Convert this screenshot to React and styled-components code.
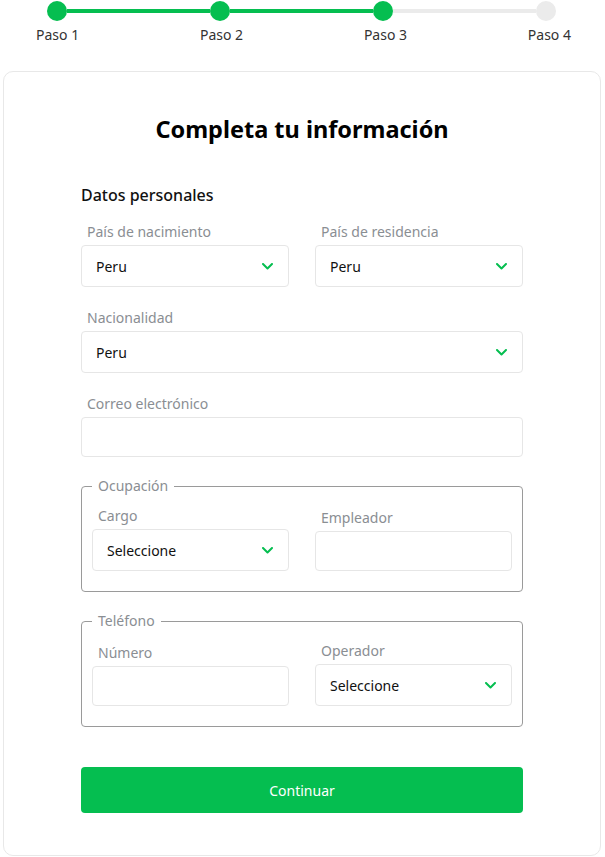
import React from "react"
import styled, { createGlobalStyle } from "styled-components"

const GREEN = "#05be50"

const GlobalStyle = createGlobalStyle`
  body {
    margin: 0;
    background: #ffffff;
    font-family: "Noto Sans", "Open Sans", Arial, sans-serif;
    color: #111111;
  }
  * { box-sizing: border-box; }
`

const Page = styled.div`
  width: 605px;
  padding-top: 1px;
`

const Stepper = styled.div`
  display: flex;
  flex-direction: column;
`

const DotsRow = styled.div`
  display: flex;
  align-items: center;
  padding: 0 49px 0 47px;
`

const Dot = styled.div`
  width: 20px;
  height: 20px;
  border-radius: 50%;
  flex-shrink: 0;
  background: ${(p) => (p.active ? GREEN : "#ebebeb")};
`

const Track = styled.div`
  flex: 1;
  height: 4px;
  background: ${(p) => (p.active ? GREEN : "#ebebeb")};
`

const LabelsRow = styled.div`
  display: flex;
  justify-content: space-between;
  padding: 4px 34px 0 36px;
`

const StepLabel = styled.span`
  font-size: 14px;
  line-height: 20px;
  color: #333;
`

const Card = styled.div`
  margin: 26px 4px 0 3px;
  border: 1px solid #e8e8e8;
  border-radius: 10px;
  padding: 42px 77px 42px;
  display: flex;
  flex-direction: column;
`

const Title = styled.h1`
  margin: 0;
  text-align: center;
  font-size: 23.5px;
  line-height: 30px;
  font-weight: 700;
  color: #000;
`

const SectionTitle = styled.h2`
  margin: 40px 0 16px;
  font-size: 16px;
  line-height: 22px;
  font-weight: 500;
  color: #111;
`

const Row = styled.div`
  display: grid;
  grid-template-columns: 1fr 1fr;
  column-gap: 26px;
  align-items: end;
  margin-bottom: ${(p) => p.mb ?? 21}px;
`

const Field = styled.div`
  display: flex;
  flex-direction: column;
  margin-bottom: ${(p) => p.mb ?? 0}px;
`

const Label = styled.label`
  font-size: 14px;
  line-height: 20px;
  color: #8a8e93;
  padding-left: 6px;
  margin-bottom: 3px;
`

const Box = styled.div`
  height: ${(p) => (p.select ? 42 : 40)}px;
  border: 1px solid #e6e6e6;
  border-radius: 4px;
  display: flex;
  align-items: center;
  justify-content: space-between;
  padding: 0 15px 0 14px;
  font-size: 14px;
  color: #111;
`

const Fieldset = styled.fieldset`
  margin: 0 0 ${(p) => p.mb ?? 0}px;
  border: 1px solid #9a9a9a;
  border-radius: 4px;
  padding: 10px 10px 20px;
  min-width: 0;
`

const Legend = styled.legend`
  margin-left: 0;
  padding: 0 6px;
  font-size: 14px;
  line-height: 20px;
  color: #8a8e93;
`

const Button = styled.button`
  height: 46px;
  border: none;
  border-radius: 4px;
  background: ${GREEN};
  color: #fff;
  font-family: inherit;
  font-size: 14px;
  cursor: pointer;
`

const Chevron = () => (
  <svg width="11" height="7" viewBox="0 0 11 7" fill="none">
    <path d="M1 1l4.5 4.5L10 1" stroke={GREEN} strokeWidth="2" strokeLinecap="round" strokeLinejoin="round" />
  </svg>
)

const Select = ({ value }) => (
  <Box select>
    <span>{value}</span>
    <Chevron />
  </Box>
)

const steps = ["Paso 1", "Paso 2", "Paso 3", "Paso 4"]
const current = 3

export default function App() {
  return (
    <Page>
      <GlobalStyle />
      <Stepper>
        <DotsRow>
          {steps.map((s, i) => (
            <React.Fragment key={s}>
              {i > 0 && <Track active={i < current} />}
              <Dot active={i < current} />
            </React.Fragment>
          ))}
        </DotsRow>
        <LabelsRow>
          {steps.map((s) => (
            <StepLabel key={s}>{s}</StepLabel>
          ))}
        </LabelsRow>
      </Stepper>

      <Card>
        <Title>Completa tu información</Title>
        <SectionTitle>Datos personales</SectionTitle>
        <Row>
          <Field>
            <Label>País de nacimiento</Label>
            <Select value="Peru" />
          </Field>
          <Field>
            <Label>País de residencia</Label>
            <Select value="Peru" />
          </Field>
        </Row>
        <Field mb={21}>
          <Label>Nacionalidad</Label>
          <Select value="Peru" />
        </Field>
        <Field mb={19}>
          <Label>Correo electrónico</Label>
          <Box />
        </Field>

        <Fieldset mb={19}>
          <Legend>Ocupación</Legend>
          <Row mb={0}>
            <Field>
              <Label>Cargo</Label>
              <Select value="Seleccione" />
            </Field>
            <Field>
              <Label>Empleador</Label>
              <Box />
            </Field>
          </Row>
        </Fieldset>

        <Fieldset mb={40}>
          <Legend>Teléfono</Legend>
          <Row mb={0}>
            <Field>
              <Label>Número</Label>
              <Box />
            </Field>
            <Field>
              <Label>Operador</Label>
              <Select value="Seleccione" />
            </Field>
          </Row>
        </Fieldset>

        <Button>Continuar</Button>
      </Card>
    </Page>
  )
}
